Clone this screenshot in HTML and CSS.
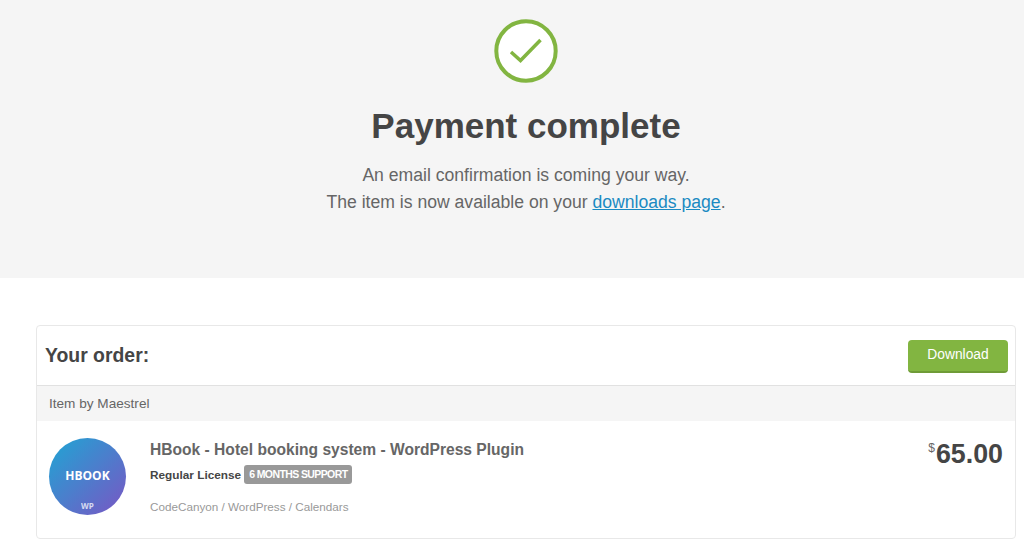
FILE: index.html

```html
<!DOCTYPE html>
<html>
<head>

	<meta charset="UTF-8">
	<title>Payment complete</title>

	<link rel="stylesheet" href="styles.css">

</head>
<body>

	<div class="hero">

		<svg class="hero-icon" width="64" height="64" viewBox="0 0 64 64">
			<circle cx="32" cy="32" r="29.7" fill="#fff" stroke="#82b541" stroke-width="4"/>
			<path d="M17 33 L26.5 41.5 L46.5 21" fill="none" stroke="#82b541" stroke-width="3.5"/>
		</svg>

		<h1>Payment complete</h1>

		<p>An email confirmation is coming your way.<br>The item is now available on your <a href="#">downloads page</a>.</p>

	</div>

	<div class="order">

		<div class="order-head">
			<h2>Your order:</h2>
			<a class="btn" href="#">Download</a>
		</div>

		<div class="order-author">Item by Maestrel</div>

		<div class="order-item">

			<div class="thumb">
				<span class="thumb-name">HBOOK</span>
				<span class="thumb-wp">WP</span>
			</div>

			<div class="item-info">
				<h3>HBook - Hotel booking system - WordPress Plugin</h3>
				<div class="item-license">
					<b>Regular License</b>
					<span class="tag">6 MONTHS SUPPORT</span>
				</div>
				<div class="item-path">CodeCanyon / WordPress / Calendars</div>
			</div>

			<div class="price"><sup>$</sup>65.00</div>

		</div>

	</div>

</body>
</html>
```

FILE: styles.css

```css
html {
	box-sizing: border-box;
}

*,
*:before,
*:after {
	box-sizing: inherit;
}

body {
	margin: 0;
	font-family: "Liberation Sans", Arial, sans-serif;
	color: #666;
	background: #fff;
}

.hero {
	height: 278px;
	padding: 19px 0 0 28px;
	background: #f5f5f5;
	text-align: center;
}

.hero-icon {
	display: block;
	margin: 0 auto;
}

.hero h1 {
	margin: 18px 0 0;
	font-size: 35px;
	line-height: 50px;
	font-weight: bold;
	color: #454545;
}

.hero p {
	margin: 11px 0 0;
	font-size: 17.6px;
	line-height: 27px;
}

.hero a {
	color: #1a8ac2;
}

.order {
	margin: 47px 8px 0 36px;
	height: 214px;
	border: 1px solid #e8e8e8;
	border-radius: 4px;
}

.order-head {
	display: flex;
	align-items: center;
	justify-content: space-between;
	height: 60px;
	padding: 0 7px 0 8px;
	border-bottom: 1px solid #e1e1e1;
}

.order-head h2 {
	margin: 0;
	font-size: 19.4px;
	font-weight: bold;
	color: #454545;
}

.btn {
	display: block;
	width: 100px;
	height: 33px;
	margin-top: 1px;
	line-height: 30px;
	text-align: center;
	font-size: 13.8px;
	color: #fff;
	text-decoration: none;
	background: #82b541;
	border-bottom: 2px solid #6f9b37;
	border-radius: 4px;
}

.order-author {
	height: 35px;
	padding: 0 12px;
	font-size: 13.6px;
	line-height: 35px;
	background: #f5f5f5;
}

.order-item {
	display: flex;
	align-items: flex-start;
	padding: 17px 12px 0;
}

.thumb {
	position: relative;
	flex: none;
	width: 77px;
	height: 77px;
	border-radius: 50%;
	background: linear-gradient(135deg, #1ea6d4, #7a55c4);
	color: #fff;
	text-align: center;
	font-family: "Open Sans", sans-serif;
	font-weight: bold;
}

.thumb-name {
	position: absolute;
	left: 0;
	right: 0;
	top: 30px;
	font-size: 12px;
	line-height: 16px;
}

.thumb-wp {
	position: absolute;
	left: 0;
	right: 0;
	top: 62px;
	font-size: 8px;
	line-height: 11px;
	opacity: .75;
}

.item-info {
	flex: 1;
	margin-left: 24px;
}

.item-info h3 {
	margin: 1px 0 0;
	font-size: 15.6px;
	line-height: 22px;
	font-weight: bold;
}

.item-license {
	display: flex;
	align-items: center;
	margin-top: 4px;
	font-size: 11.8px;
	color: #454545;
}

.tag {
	margin-left: 3px;
	padding: 0 5px;
	height: 19px;
	line-height: 19px;
	font-size: 10.5px;
	font-weight: bold;
	letter-spacing: -.6px;
	color: #fff;
	background: #999;
	border-radius: 3px;
}

.item-path {
	margin-top: 15px;
	font-size: 11.7px;
	line-height: 16px;
	color: #999;
}

.price {
	margin-top: 1px;
	font-size: 26.8px;
	line-height: 30px;
	font-weight: bold;
	color: #454545;
}

.price sup {
	margin-right: 1px;
	font-size: 12px;
	font-weight: normal;
	line-height: 0;
	vertical-align: 11px;
	color: #666;
}
```
